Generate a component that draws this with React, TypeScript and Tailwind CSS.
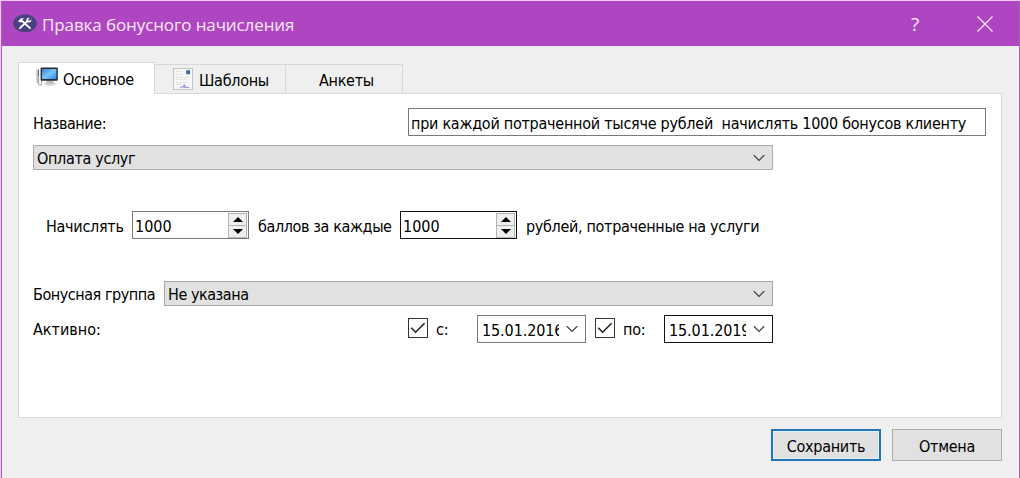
import React from 'react';

const ChevronDown: React.FC = () => (
  <svg width="12" height="8" viewBox="0 0 12 8" fill="none" className="shrink-0">
    <path d="M0.8 1.2L6 6.4L11.2 1.2" stroke="#444" strokeWidth="1.3" />
  </svg>
);

const AppIcon: React.FC = () => (
  <svg width="24" height="19" viewBox="0 0 24 19" className="shrink-0">
    <ellipse cx="12" cy="9.3" rx="11.8" ry="9" fill="#48427f" />
    <path d="M8.5 6.5L17 14.2" stroke="#fff" strokeWidth="1.8" strokeLinecap="round" />
    <path d="M4.8 7.4L8 4.2H11.4L9.2 5.4L9.8 7L7.6 8.8L6.6 7.8Z" fill="#fff" />
    <path d="M6.9 14.2L14.5 7" stroke="#fff" strokeWidth="1.8" strokeLinecap="round" />
    <path d="M18.4 5.4L16.3 7L15 5.8L16.7 3.9C14.6 3.4 12.9 5 13.5 7L15 8.4C17 8.8 18.8 7.4 18.4 5.4Z" fill="#fff" />
  </svg>
);

const ComputerIcon: React.FC = () => (
  <svg width="22" height="20" viewBox="0 0 22 20" className="shrink-0">
    <defs>
      <linearGradient id="screen" x1="0" y1="0" x2="1" y2="1">
        <stop offset="0" stopColor="#2e86d6" />
        <stop offset="0.5" stopColor="#79c4fa" />
        <stop offset="1" stopColor="#2889df" />
      </linearGradient>
    </defs>
    <path d="M0.3 3L2 2.4V16.5L0.3 15.5Z" fill="#c4c4c4" />
    <path d="M2 2.4H3V16H2Z" fill="#666" />
    <path d="M2.6 9V16.5C2.6 18.6 5.5 18.6 5.5 16.5V13" fill="none" stroke="#aaa" strokeWidth="1.1" />
    <ellipse cx="14" cy="17" rx="6" ry="1.8" fill="#d8d8d8" />
    <path d="M11 13H17L18 16.5H10Z" fill="#bdbdbd" />
    <rect x="4.6" y="0.6" width="17.2" height="13.2" rx="0.8" fill="#252c35" />
    <rect x="6" y="2" width="14.4" height="10" fill="url(#screen)" />
  </svg>
);

const DocumentIcon: React.FC = () => (
  <svg width="20" height="22" viewBox="0 0 20 22" className="shrink-0">
    <rect x="0.5" y="0.5" width="19" height="21" fill="#f7f7f7" stroke="#c4c4c4" />
    <rect x="13.2" y="2.2" width="3.8" height="4" fill="#3d68ae" />
    <path d="M3 3.5H9M2.5 6.5H10M2.5 9.5H15M2.5 11.5H13M2.5 14.5H14M3 16.5H9" stroke="#dcdcdc" strokeWidth="0.9" strokeDasharray="3 0.6" />
    <path d="M7 19.5L10 18.8L11 16.8L12.5 17.7L10.5 19.2L16 19.5" fill="none" stroke="#7474c8" strokeWidth="0.8" />
  </svg>
);

interface TabProps {
  label: string;
  className: string;
  children?: React.ReactNode;
}

const Tab: React.FC<TabProps> = ({ label, className, children }) => (
  <div className={`flex border-[#d9d9d9] ${className}`}>
    {children}
    <span className="pt-px">{label}</span>
  </div>
);

interface SpinProps {
  value: string;
  className: string;
}

const SpinBox: React.FC<SpinProps> = ({ value, className }) => (
  <div className={`flex h-7 w-[117px] items-center justify-between border bg-white pr-px pl-[2px] ${className}`}>
    <span className="pt-[3px] tracking-normal">{value}</span>
    <div className="flex h-[25px] w-[19px] flex-col border border-[#b4b4b4] bg-[#eeeeee]">
      <div className="flex flex-1 items-center justify-center border-b border-[#b4b4b4]">
        <svg width="10" height="5" viewBox="0 0 10 5"><path d="M5 0L10 5H0Z" fill="#000" /></svg>
      </div>
      <div className="flex flex-1 items-center justify-center">
        <svg width="10" height="5" viewBox="0 0 10 5"><path d="M0 0H10L5 5Z" fill="#000" /></svg>
      </div>
    </div>
  </div>
);

const Combo: React.FC<{ value: string; className: string }> = ({ value, className }) => (
  <div className={`flex h-[25px] items-center justify-between border bg-[#e1e1e1] pr-[7px] pl-[3px] ${className}`}>
    <span className="pt-[2px]">{value}</span>
    <ChevronDown />
  </div>
);

const CheckBox: React.FC = () => (
  <div className="flex size-5 items-center justify-center border border-[#333] bg-white">
    <svg width="16" height="12" viewBox="0 0 16 12" fill="none">
      <path d="M1.2 5.8L5.6 10.2L14.6 1.2" stroke="#222" strokeWidth="1.6" />
    </svg>
  </div>
);

const DateBox: React.FC<{ value: string; className: string }> = ({ value, className }) => (
  <div className={`flex h-7 w-[109px] items-center justify-between border bg-white pr-[7px] pl-1 ${className}`}>
    <span className="w-[77px] overflow-hidden pt-[3px] tracking-[-0.1px] whitespace-nowrap">{value}</span>
    <ChevronDown />
  </div>
);

export default function App() {
  return (
    <div className="h-[478px] w-[1020px] overflow-hidden border-t border-l border-[#edc9f4] font-['DejaVu_Sans_Condensed','DejaVu_Sans',sans-serif] text-[16px] leading-5 tracking-[-0.28px] text-black [font-stretch:condensed]">
      <div className="flex h-full flex-col border-r border-l border-[#a75bb2] bg-[#efefef]">
        <header className="flex h-[45px] shrink-0 items-center bg-[#af46c1] pl-[11px] text-[#fbe9fd]">
          <AppIcon />
          <h1 className="ml-[5px] pt-[3px] font-['Open_Sans',sans-serif] text-[17px] leading-6 tracking-[-0.1px] [font-stretch:normal]">
            Правка бонусного начисления
          </h1>
          <span className="ml-auto font-['Open_Sans',sans-serif] text-[19px] [font-stretch:normal]">?</span>
          <svg width="16" height="16" viewBox="0 0 16 16" className="mr-[26px] ml-[58px]">
            <path d="M0.5 0.5L15.5 15.5M15.5 0.5L0.5 15.5" stroke="#fbe9fd" strokeWidth="1.2" />
          </svg>
        </header>

        <main className="px-4 pt-4">
          <nav className="flex h-[31px] items-end">
            <Tab label="Основное" className="relative z-10 -mb-px h-8 w-[137px] gap-[5px] border-t border-r border-l bg-white pt-[4px] pl-[17px] leading-6">
              <ComputerIcon />
            </Tab>
            <Tab label="Шаблоны" className="h-[29px] w-[131px] gap-[6px] border-t border-r pt-[3px] pl-[18px] leading-6">
              <DocumentIcon />
            </Tab>
            <Tab label="Анкеты" className="h-[29px] w-[117px] border-t border-r pt-[3px] pl-[33px] leading-6" />
          </nav>

          <section className="h-[325px] w-[984px] border border-[#d9d9d9] bg-white pt-[14px] pl-[14px]">
            <div className="flex h-7 items-center">
              <label className="w-[375px] pt-[3px] tracking-[-0.45px]">Название:</label>
              <div className="h-7 w-[578px] border border-[#7a7a7a] pt-[5px] pl-[2px] tracking-[-0.26px] whitespace-pre">
                при каждой потраченной тысяче рублей  начислять 1000 бонусов клиенту
              </div>
            </div>
            <Combo value="Оплата услуг" className="mt-[9px] w-[740px] border-[#adadad] tracking-[-0.33px]" />

            <div className="mt-[41px] flex h-7 items-center pl-[13px]">
              <span className="w-[86px] pt-[3px]">Начислять</span>
              <SpinBox value="1000" className="border-[#7a7a7a]" />
              <span className="w-[151px] pt-[3px] pl-[9px] tracking-[-0.38px] whitespace-nowrap">баллов за каждые</span>
              <SpinBox value="1000" className="border-[#111]" />
              <span className="pt-[3px] pl-[9px] tracking-[-0.32px]">рублей, потраченные на услуги</span>
            </div>

            <div className="mt-[42px] flex items-center">
              <span className="w-[131px] pt-[2px] tracking-[-0.45px] whitespace-nowrap">Бонусная группа</span>
              <Combo value="Не указана" className="w-[609px] border-[#9fa8aa] tracking-[-0.45px]" />
            </div>

            <div className="mt-[9px] flex h-7 items-center">
              <span className="w-[375px] pt-[2px] tracking-normal">Активно:</span>
              <div className="-mt-[2px]"><CheckBox /></div>
              <span className="w-[49px] pt-[2px] pl-2">с:</span>
              <DateBox value="15.01.2016" className="border-[#7a7a7a]" />
              <div className="-mt-[2px] ml-[9px]"><CheckBox /></div>
              <span className="w-[49px] pt-[2px] pl-2">по:</span>
              <DateBox value="15.01.2019" className="border-[#111]" />
            </div>
          </section>

          <footer className="mt-[11px] flex w-[984px] justify-end gap-[11px]">
            <button className="h-8 w-[110px] border-2 border-[#2475b0] bg-[#e1e1e1] pt-[3px] shadow-[inset_0_0_0_1px_#d9f2fb]">Сохранить</button>
            <button className="h-8 w-[110px] border border-[#adadad] bg-[#e1e1e1] pt-[3px]">Отмена</button>
          </footer>
        </main>
      </div>
    </div>
  );
}
